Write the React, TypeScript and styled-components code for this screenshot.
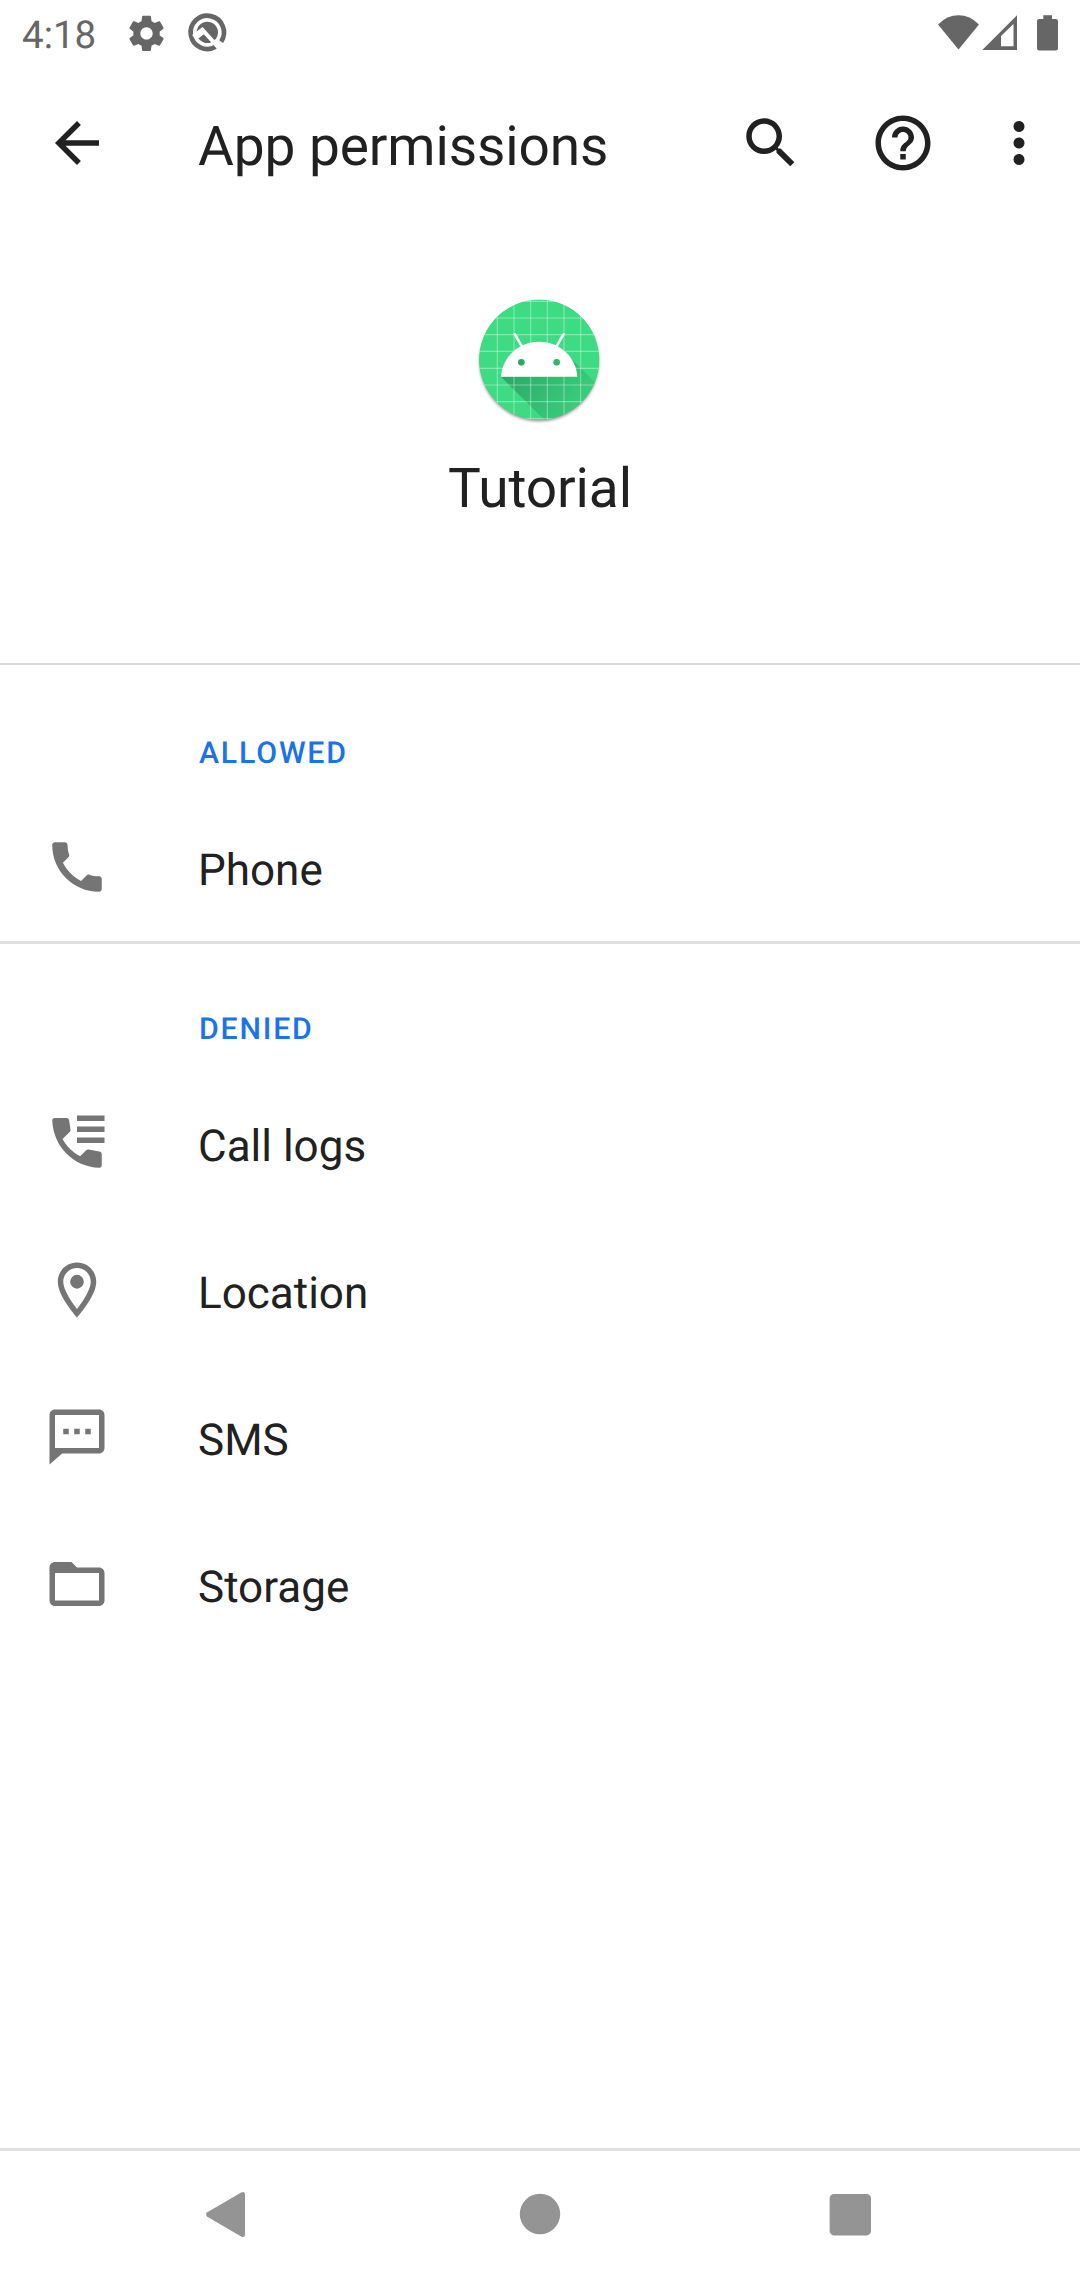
import React from 'react';
import styled, { createGlobalStyle } from 'styled-components';

const GlobalStyle = createGlobalStyle`
  body { margin: 0; background: #fff; }
  * { box-sizing: border-box; }
  svg { display: block; flex: none; }
`;

const Screen = styled.div`
  width: 1080px;
  height: 2280px;
  display: flex;
  flex-direction: column;
  background: #fff;
  color: #212121;
  font-family: Roboto, 'Noto Sans', sans-serif;
  text-rendering: geometricPrecision;
`;

const StatusBar = styled.header`
  height: 66px;
  padding: 3px 21px 0 22px;
  display: flex;
  align-items: center;
  color: #666;
`;

const Clock = styled.span`
  width: 96px;
  padding-top: 2px;
  font-size: 38.5px;
  line-height: 46px;
`;

const StatusIcons = styled.div<{ $end?: boolean }>`
  height: 60px;
  display: flex;
  align-self: flex-start;
  margin-left: ${p => (p.$end ? 'auto' : '0')};
`;

const AppBar = styled.nav`
  height: 154px;
  padding: 0 28px 0 44px;
  display: flex;
  align-items: center;
`;

const Title = styled.h1`
  flex: 1;
  margin: 0;
  padding: 8px 0 0 88px;
  font-size: 55px;
  font-weight: 400;
  line-height: 64px;
  letter-spacing: -0.1px;
`;

const Actions = styled.div`
  display: flex;
  gap: 66px;
`;

const IconButton = styled.button`
  padding: 0;
  border: 0;
  background: none;
  color: inherit;
  display: flex;
`;

const OverflowButton = styled(IconButton)`
  margin-left: -16px;
`;

const AppHeader = styled.section`
  height: 445px;
  padding-top: 74px;
  display: flex;
  flex-direction: column;
  align-items: center;
  border-bottom: 2px solid #dadae0;
`;

const AppName = styled.h2`
  margin: 27px 0 0;
  font-size: 55px;
  font-weight: 400;
  line-height: 64px;
  letter-spacing: -0.1px;
`;

const Group = styled.section<{ $divided?: boolean }>`
  border-bottom: ${p => (p.$divided ? '3px solid #e0e0e0' : '0')};
`;

const GroupTitle = styled.h3<{ $height: number }>`
  height: ${p => p.$height}px;
  margin: 0;
  padding: 0 0 22px 199px;
  display: flex;
  align-items: flex-end;
  color: #1a73e8;
  font-size: 30.25px;
  font-weight: 500;
  line-height: 36px;
  letter-spacing: 0.06em;
`;

const Row = styled.div`
  height: 147px;
  padding: 0 44px 1px;
  display: flex;
  align-items: center;
  gap: 88px;
`;

const RowIcon = styled.svg`
  width: 66px;
  height: 66px;
  fill: #757575;
`;

const RowLabel = styled.span`
  padding-top: 5px;
  font-size: 44px;
  line-height: 52px;
`;

const NavBar = styled.footer`
  height: 132px;
  margin-top: auto;
  padding-bottom: 1px;
  border-top: 3px solid #e0e0e0;
  display: flex;
  align-items: center;
  justify-content: center;
  gap: 250px;
  color: #949494;
`;

const ICONS: Record<string, string> = {
  phone:
    'M20.01 15.38c-1.23 0-2.42-.2-3.53-.56-.35-.12-.74-.03-1.01.24l-2 2c-2.83-1.44-5.15-3.75-6.59-6.58l2-2.01c.28-.27.36-.66.25-1.01C8.76 6.35 8.57 5.16 8.57 4c0-.55-.45-1-1-1H4c-.55 0-1 .45-1 1 0 9.39 7.61 17 17 17 .55 0 1-.45 1-1v-3.62c0-.55-.44-1-.99-1z',
  callLog:
    'M20.1 15.05l-3.9-.68c-.32-.05-.63.04-.85.26l-2.2 2.2c-2.65-1.4-4.95-3.65-6.4-6.3l2.55-2.5c.3-.3.42-.55.35-.85L9.12 3.7c-.08-.45-.45-.75-.9-.75H3.9c-.55 0-.92.42-.9.95.4 9.35 7.7 16.8 17.05 17.1.55 0 .95-.4.95-.95V16c0-.5-.38-.87-.9-.95zM12 2h10v2H12zM12 6h10v2H12zM12 10h10v2H12z',
  location:
    'M12 2C8.13 2 5 5.13 5 9c0 5.25 7 13 7 13s7-7.75 7-13c0-3.87-3.13-7-7-7zM7 9c0-2.76 2.24-5 5-5s5 2.24 5 5c0 2.88-2.88 7.19-5 9.88C9.92 16.21 7 11.85 7 9zM12 6.5a2.5 2.5 0 1 0 0 5a2.5 2.5 0 1 0 0-5z',
  sms:
    'M20 2H4c-1.1 0-2 .9-2 2v18l4.6-4H20c1.1 0 2-.9 2-2V4c0-1.1-.9-2-2-2zm0 14H4V4h16v12zM7 9h2v2H7zM11 9h2v2h-2zM15 9h2v2h-2z',
  storage:
    'M20 6h-8l-2-2H4c-1.1 0-2 .9-2 2v12c0 1.1.9 2 2 2h16c1.1 0 2-.9 2-2V8c0-1.1-.9-2-2-2zm0 12H4V8h16v10z',
};

function BarIcon({ d }: { d: string }) {
  return (
    <svg width="66" height="66" viewBox="0 0 24 24" fill="currentColor">
      <path d={d} />
    </svg>
  );
}

function PermissionRow({ icon, label }: { icon: string; label: string }) {
  return (
    <Row>
      <RowIcon viewBox="0 0 24 24">
        <path fillRule="evenodd" d={ICONS[icon]} />
      </RowIcon>
      <RowLabel>{label}</RowLabel>
    </Row>
  );
}

function AppLogo() {
  const xs = [202, 252, 302, 352, 402, 452];
  const ys = [64, 114, 164, 214, 265, 315, 365, 416];
  return (
    <svg width="132" height="136" viewBox="132 42 396 408">
      <defs>
        <clipPath id="disc">
          <circle cx="327.5" cy="239" r="180.5" />
        </clipPath>
        <linearGradient id="cast" gradientUnits="userSpaceOnUse" x1="250" y1="250" x2="430" y2="400">
          <stop offset="0" stopColor="#2a9d62" stopOpacity="0.85" />
          <stop offset="1" stopColor="#2a9d62" stopOpacity="0.22" />
        </linearGradient>
        <filter id="soft" x="-10%" y="-10%" width="120%" height="120%">
          <feGaussianBlur stdDeviation="4" />
        </filter>
      </defs>
      <circle cx="327.5" cy="245" r="179" fill="#000" opacity="0.42" filter="url(#soft)" />
      <g clipPath="url(#disc)">
        <circle cx="327.5" cy="239" r="181" fill="#3ddc84" />
        <path d="M213 290L350 427L520 420V332L425 237L400 290Z" fill="url(#cast)" />
        <g stroke="#fff" strokeOpacity="0.36" strokeWidth="3.4">
          {xs.map(x => <path key={x} d={`M${x} 50V430`} />)}
          {ys.map(y => <path key={y} d={`M140 ${y}H520`} />)}
        </g>
      </g>
      <path d="M213 290C217 231 265 185 327.5 185S438 231 442 290Z" fill="#fff" />
      <path d="M254 162L276 200M401 162L379 200" stroke="#fff" strokeWidth="7.5" strokeLinecap="round" />
      <circle cx="274" cy="247" r="10" fill="#2fa767" />
      <circle cx="380" cy="247" r="10" fill="#2fb56e" />
    </svg>
  );
}

export default function App() {
  return (
    <>
      <GlobalStyle />
      <Screen>
        <StatusBar>
          <Clock>4:18</Clock>
          <StatusIcons>
            <svg width="120" height="60" viewBox="118 3 120 60" fill="#666">
              <path
                transform="translate(125.4 12.3) scale(1.76)"
                d="M19.43 12.98c.04-.32.07-.64.07-.98s-.03-.66-.07-.98l2.11-1.65c.19-.15.24-.42.12-.64l-2-3.46c-.12-.22-.39-.3-.61-.22l-2.49 1c-.52-.4-1.08-.73-1.69-.98l-.38-2.65C14.46 2.18 14.25 2 14 2h-4c-.25 0-.46.18-.49.42l-.38 2.65c-.61.25-1.17.59-1.69.98l-2.49-1c-.23-.09-.49 0-.61.22l-2 3.46c-.13.22-.07.49.12.64l2.11 1.65c-.04.32-.07.65-.07.98s.03.66.07.98l-2.11 1.65c-.19.15-.24.42-.12.64l2 3.46c.12.22.39.3.61.22l2.49-1c.52.4 1.08.73 1.69.98l.38 2.65c.03.24.24.42.49.42h4c.25 0 .46-.18.49-.42l.38-2.65c.61-.25 1.17-.59 1.69-.98l2.49 1c.23.09.49 0 .61-.22l2-3.46c.12-.22.07-.49-.12-.64l-2.11-1.65zM12 15.5c-1.93 0-3.5-1.57-3.5-3.5s1.57-3.5 3.5-3.5 3.5 1.57 3.5 3.5-1.57 3.5-3.5 3.5z"
              />
              <g transform="translate(180 8) scale(.3333)">
                <path d="M107 116.5A50 50 0 1 1 123.500 101" fill="none" stroke="#666" strokeWidth="14" />
                <circle cx="82" cy="73" r="32" />
                <path d="M40 86L67 65L118 121" fill="none" stroke="#fff" strokeWidth="12" />
                <path d="M40 84L62 68L73 78L56 91Z" fill="#fff" />
                <path d="M57 92L71 82L92 104Q70 108 57 92Z" />
              </g>
            </svg>
          </StatusIcons>
          <StatusIcons $end>
            <svg width="124" height="60" viewBox="935 3 124 60" fill="#666">
              <path d="M938 24.5Q947 15.3 958.5 15.3T979 24.5L958.5 49.5Z" />
              <path fillRule="evenodd" d="M982.3 50L1017 15.2V50ZM1001 46.3H1013.5V24L1001 36Z" />
              <path d="M1043.3 15.3H1052V19H1055.7Q1058 19 1058 21.3V48.3Q1058 50.6 1055.7 50.6H1039.3Q1037 50.6 1037 48.3V21.3Q1037 19 1039.3 19H1043.3Z" />
            </svg>
          </StatusIcons>
        </StatusBar>

        <AppBar>
          <IconButton aria-label="Back">
            <BarIcon d="M20 11H7.83l5.59-5.59L12 4l-8 8 8 8 1.41-1.41L7.83 13H20v-2z" />
          </IconButton>
          <Title>App permissions</Title>
          <Actions>
            <IconButton aria-label="Search">
              <BarIcon d="M15.5 14h-.79l-.28-.27C15.41 12.59 16 11.11 16 9.5 16 5.91 13.09 3 9.5 3S3 5.91 3 9.5 5.91 16 9.5 16c1.61 0 3.09-.59 4.23-1.57l.27.28v.79l5 4.99L20.49 19l-4.99-5zm-6 0C7.01 14 5 11.99 5 9.5S7.01 5 9.5 5 14 7.01 14 9.5 11.99 14 9.5 14z" />
            </IconButton>
            <IconButton aria-label="Help">
              <BarIcon d="M11 18h2v-2h-2v2zm1-16C6.48 2 2 6.48 2 12s4.48 10 10 10 10-4.48 10-10S17.52 2 12 2zm0 18c-4.41 0-8-3.59-8-8s3.59-8 8-8 8 3.59 8 8-3.59 8-8 8zm0-14c-2.21 0-4 1.79-4 4h2c0-1.1.9-2 2-2s2 .9 2 2c0 2-3 1.75-3 5h2c0-2.25 3-2.5 3-5 0-2.21-1.79-4-4-4z" />
            </IconButton>
            <OverflowButton aria-label="More options">
              <BarIcon d="M12 8c1.1 0 2-.9 2-2s-.9-2-2-2-2 .9-2 2 .9 2 2 2zm0 2c-1.1 0-2 .9-2 2s.9 2 2 2 2-.9 2-2-.9-2-2-2zm0 6c-1.1 0-2 .9-2 2s.9 2 2 2 2-.9 2-2-.9-2-2-2z" />
            </OverflowButton>
          </Actions>
        </AppBar>

        <AppHeader>
          <AppLogo />
          <AppName>Tutorial</AppName>
        </AppHeader>

        <Group $divided>
          <GroupTitle $height={129}>ALLOWED</GroupTitle>
          <PermissionRow icon="phone" label="Phone" />
        </Group>
        <Group>
          <GroupTitle $height={126}>DENIED</GroupTitle>
          <PermissionRow icon="callLog" label="Call logs" />
          <PermissionRow icon="location" label="Location" />
          <PermissionRow icon="sms" label="SMS" />
          <PermissionRow icon="storage" label="Storage" />
        </Group>

        <NavBar>
          <svg width="60" height="60" viewBox="0 0 60 60" fill="currentColor">
            <path d="M7.3 27.3L41.2 7.6Q45 5.8 45 9.6V49.4Q45 53.2 41.2 51.4L7.3 31.7Q4.8 29.5 7.3 27.3Z" />
          </svg>
          <svg width="60" height="60" viewBox="0 0 60 60" fill="currentColor">
            <circle cx="30" cy="29" r="20.2" />
          </svg>
          <svg width="60" height="60" viewBox="0 0 60 60" fill="currentColor">
            <rect x="9.6" y="9" width="41.4" height="41.4" rx="4.5" />
          </svg>
        </NavBar>
      </Screen>
    </>
  );
}
